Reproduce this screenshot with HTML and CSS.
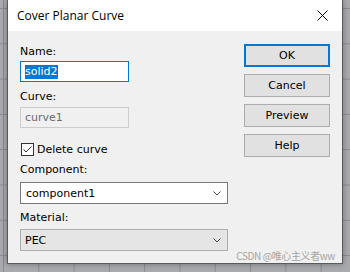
FILE: index.html
```html
<!DOCTYPE html>
<html lang="en">
<head>
    <meta charset="UTF-8">
    <meta name="viewport" content="width=device-width, initial-scale=1.0">
    <title>Cover Planar Curve</title>
    <link rel="stylesheet" href="styles.css">
</head>
<body>
    <div class="dialog">
        <div class="titlebar">
            <span class="title">Cover Planar Curve</span>
            <svg class="close" width="11" height="11" viewBox="0 0 11 11">
                <path d="M0.5 0.5 L10.5 10.5 M10.5 0.5 L0.5 10.5" stroke="#000" stroke-width="1"/>
            </svg>
        </div>
        <div class="content">
            <div class="form">
                <div class="label first">Name:</div>
                <div class="field active"><span class="selected">solid2</span></div>
                <div class="label gap8">Curve:</div>
                <div class="field disabled">curve1</div>
                <div class="check-row">
                    <svg class="checkbox" width="13" height="13" viewBox="0 0 13 13">
                        <rect x="0.5" y="0.5" width="12" height="12" fill="#fff" stroke="#333"/>
                        <path d="M2.5 6.5 L5 9 L10.5 3.5" fill="none" stroke="#333" stroke-width="1"/>
                    </svg>
                    <span>Delete curve</span>
                </div>
                <div class="label gap7">Component:</div>
                <div class="combo">
                    <span>component1</span>
                    <svg class="chevron" width="8" height="5" viewBox="0 0 8 5"><path d="M0.5 0.5 L4 4 L7.5 0.5" fill="none" stroke="#444"/></svg>
                </div>
                <div class="label gap7">Material:</div>
                <div class="combo locked">
                    <span>PEC</span>
                    <svg class="chevron" width="8" height="5" viewBox="0 0 8 5"><path d="M0.5 0.5 L4 4 L7.5 0.5" fill="none" stroke="#444"/></svg>
                </div>
            </div>
            <div class="actions">
                <button class="btn default">OK</button>
                <button class="btn">Cancel</button>
                <button class="btn">Preview</button>
                <button class="btn">Help</button>
            </div>
        </div>
        <div class="watermark">CSDN @唯心主义者ww</div>
    </div>
</body>
</html>
```

FILE: styles.css
```css
body {
    margin: 0;
    height: 272px;
    overflow: hidden;
    font-family: "DejaVu Sans", sans-serif;
    font-size: 11px;
    background-color: #a9aaaf;
    background-image:
        linear-gradient(to right, #8b8c90 1px, transparent 1px),
        linear-gradient(to bottom, #8b8c90 1px, transparent 1px);
    background-size: 35.3px 35.3px;
    background-position: 3px 8px;
}
.dialog {
    position: relative;
    margin-left: 7px;
    width: 336px;
    height: 264px;
    box-sizing: border-box;
    border: 1px solid #5a5a5a;
    border-top: none;
    background: #f0f0f0;
    box-shadow: 0 0 6px rgba(0, 0, 0, 0.35);
}
.titlebar {
    height: 31px;
    background: #fff;
    display: flex;
    align-items: center;
    padding: 0 9px;
}
.title {
    flex: 1;
    font-family: "Open Sans", sans-serif;
    font-size: 12px;
    color: #000;
}
.close {
    margin-right: 5px;
}
.content {
    display: flex;
    justify-content: space-between;
    padding: 13px 12px 0 12px;
}
.form {
    display: flex;
    flex-direction: column;
}
.label {
    line-height: 13px;
    height: 13px;
    color: #000;
}
.first {
    margin-top: 1px;
}
.gap8 {
    margin-top: 8px;
}
.gap7 {
    margin-top: 7px;
}
.field {
    width: 109px;
    height: 21px;
    box-sizing: border-box;
    padding-left: 4px;
    display: flex;
    align-items: center;
    margin-top: 3px;
}
.active {
    background: #fff;
    border: 1px solid #0078d7;
}
.selected {
    background: #0078d7;
    color: #fff;
    line-height: 14px;
}
.disabled {
    background: #f0f0f0;
    border: 1px solid #ccc;
    color: #6d6d6d;
    margin-top: 4px;
}
.check-row {
    display: flex;
    align-items: center;
    gap: 3px;
    height: 13px;
    margin-top: 15px;
    margin-left: 1px;
}
.combo {
    width: 208px;
    height: 22px;
    box-sizing: border-box;
    margin-top: 6px;
    padding: 0 6px 0 5px;
    display: flex;
    align-items: center;
    justify-content: space-between;
    background: #fff;
    border: 1px solid #7a7a7a;
}
.locked {
    margin-top: 5px;
    padding-left: 4px;
    background: #e5e5e5;
    border-color: #adadad;
}
.actions {
    display: flex;
    flex-direction: column;
    gap: 7px;
    width: 86px;
}
.btn {
    height: 23px;
    font-family: "DejaVu Sans", sans-serif;
    font-size: 11px;
    color: #000;
    background: #e1e1e1;
    border: 1px solid #adadad;
    padding: 0;
}
.btn.default {
    border: 2px solid #0078d7;
}
.watermark {
    position: absolute;
    right: 7px;
    bottom: 1px;
    line-height: 12px;
    font-family: "Noto Sans CJK SC", sans-serif;
    font-size: 10px;
    letter-spacing: -0.4px;
    color: #a5a5a5;
}
```
